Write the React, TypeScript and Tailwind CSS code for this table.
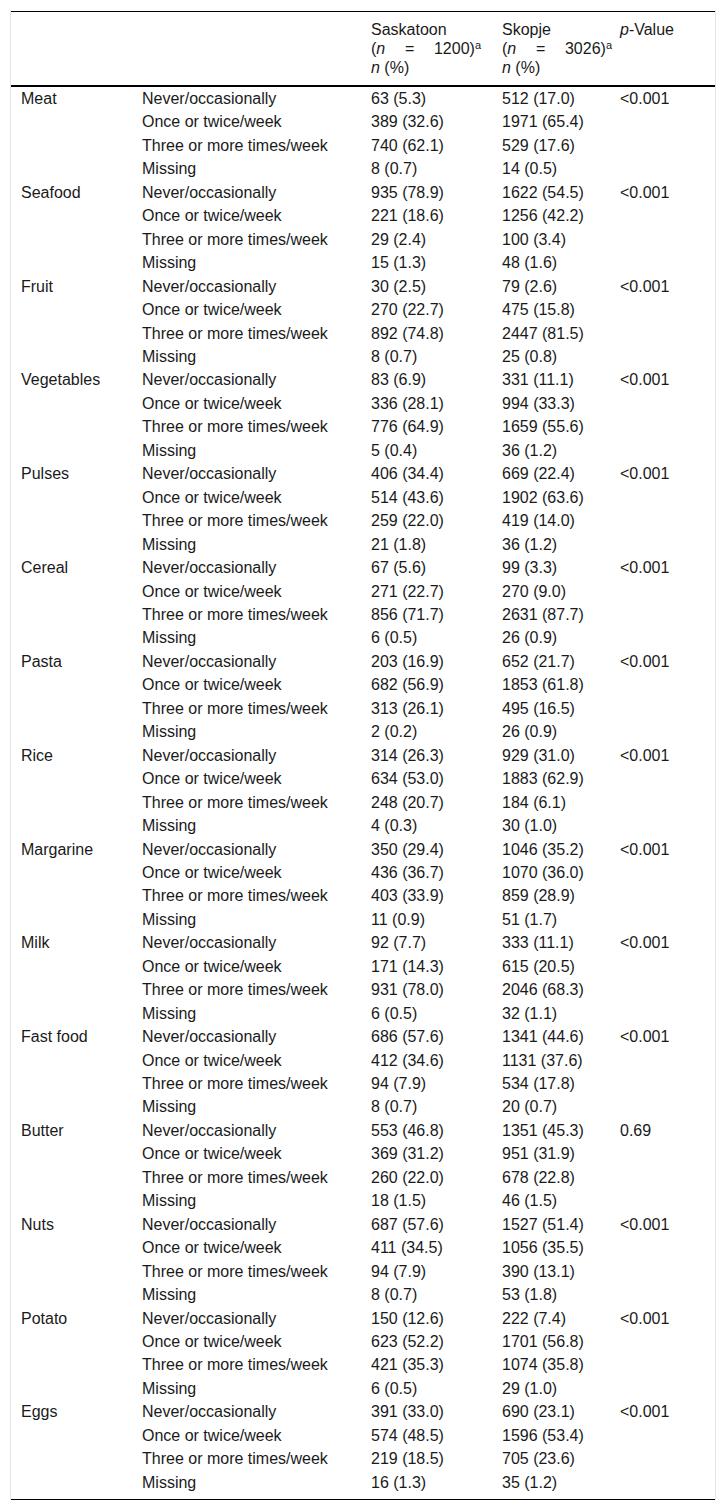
const freq = ["Never/occasionally", "Once or twice/week", "Three or more times/week", "Missing"];

const groups: { food: string; sk: string[]; mk: string[]; p: string }[] = [
  { food: "Meat", sk: ["63 (5.3)", "389 (32.6)", "740 (62.1)", "8 (0.7)"], mk: ["512 (17.0)", "1971 (65.4)", "529 (17.6)", "14 (0.5)"], p: "<0.001" },
  { food: "Seafood", sk: ["935 (78.9)", "221 (18.6)", "29 (2.4)", "15 (1.3)"], mk: ["1622 (54.5)", "1256 (42.2)", "100 (3.4)", "48 (1.6)"], p: "<0.001" },
  { food: "Fruit", sk: ["30 (2.5)", "270 (22.7)", "892 (74.8)", "8 (0.7)"], mk: ["79 (2.6)", "475 (15.8)", "2447 (81.5)", "25 (0.8)"], p: "<0.001" },
  { food: "Vegetables", sk: ["83 (6.9)", "336 (28.1)", "776 (64.9)", "5 (0.4)"], mk: ["331 (11.1)", "994 (33.3)", "1659 (55.6)", "36 (1.2)"], p: "<0.001" },
  { food: "Pulses", sk: ["406 (34.4)", "514 (43.6)", "259 (22.0)", "21 (1.8)"], mk: ["669 (22.4)", "1902 (63.6)", "419 (14.0)", "36 (1.2)"], p: "<0.001" },
  { food: "Cereal", sk: ["67 (5.6)", "271 (22.7)", "856 (71.7)", "6 (0.5)"], mk: ["99 (3.3)", "270 (9.0)", "2631 (87.7)", "26 (0.9)"], p: "<0.001" },
  { food: "Pasta", sk: ["203 (16.9)", "682 (56.9)", "313 (26.1)", "2 (0.2)"], mk: ["652 (21.7)", "1853 (61.8)", "495 (16.5)", "26 (0.9)"], p: "<0.001" },
  { food: "Rice", sk: ["314 (26.3)", "634 (53.0)", "248 (20.7)", "4 (0.3)"], mk: ["929 (31.0)", "1883 (62.9)", "184 (6.1)", "30 (1.0)"], p: "<0.001" },
  { food: "Margarine", sk: ["350 (29.4)", "436 (36.7)", "403 (33.9)", "11 (0.9)"], mk: ["1046 (35.2)", "1070 (36.0)", "859 (28.9)", "51 (1.7)"], p: "<0.001" },
  { food: "Milk", sk: ["92 (7.7)", "171 (14.3)", "931 (78.0)", "6 (0.5)"], mk: ["333 (11.1)", "615 (20.5)", "2046 (68.3)", "32 (1.1)"], p: "<0.001" },
  { food: "Fast food", sk: ["686 (57.6)", "412 (34.6)", "94 (7.9)", "8 (0.7)"], mk: ["1341 (44.6)", "1131 (37.6)", "534 (17.8)", "20 (0.7)"], p: "<0.001" },
  { food: "Butter", sk: ["553 (46.8)", "369 (31.2)", "260 (22.0)", "18 (1.5)"], mk: ["1351 (45.3)", "951 (31.9)", "678 (22.8)", "46 (1.5)"], p: "0.69" },
  { food: "Nuts", sk: ["687 (57.6)", "411 (34.5)", "94 (7.9)", "8 (0.7)"], mk: ["1527 (51.4)", "1056 (35.5)", "390 (13.1)", "53 (1.8)"], p: "<0.001" },
  { food: "Potato", sk: ["150 (12.6)", "623 (52.2)", "421 (35.3)", "6 (0.5)"], mk: ["222 (7.4)", "1701 (56.8)", "1074 (35.8)", "29 (1.0)"], p: "<0.001" },
  { food: "Eggs", sk: ["391 (33.0)", "574 (48.5)", "219 (18.5)", "16 (1.3)"], mk: ["690 (23.1)", "1596 (53.4)", "705 (23.6)", "35 (1.2)"], p: "<0.001" },
];

const cols = "grid grid-cols-[121px_229px_131px_118px_1fr]";

function CityHead({ city, n }: { city: string; n: string }) {
  return (
    <div className="pl-[10px] pt-[8px]">
      <div>{city}</div>
      <div className="flex w-[110px] justify-between">
        <span><span>(</span><i>n</i></span>
        <span>=</span>
        <span>
          {n})<sup className="text-[11px] leading-none">a</sup>
        </span>
      </div>
      <div><i>n</i> (%)</div>
    </div>
  );
}

export default function App() {
  return (
    <div className="min-h-[1512px] bg-white pt-[10px] text-[16px] text-[#1a1a1a]" style={{ fontFamily: '"Liberation Sans", Arial, sans-serif' }}>
      <div className="ml-[10px] w-[706px] border-x border-[#e4e4e4] pt-[1px]">
        <div className="border-t border-b border-black pb-[5px]">
          {/* header */}
          <div className={`${cols} h-[75px] border-b-2 border-black leading-[19px]`}>
            <div />
            <div />
            <CityHead city="Saskatoon" n="1200" />
            <CityHead city="Skopje" n="3026" />
            <div className="pl-[10px] pt-[8px]">
              <i>p</i>-Value
            </div>
          </div>

          {/* body */}
          {groups.map(g =>
            freq.map((f, i) => (
              <div key={g.food + f} className={`${cols} h-[23.46px] items-center leading-[23.46px]`}>
                <div className="pl-[10px]">{i === 0 ? g.food : ""}</div>
                <div className="pl-[10px]">{f}</div>
                <div className="pl-[10px]">{g.sk[i]}</div>
                <div className="pl-[10px]">{g.mk[i]}</div>
                <div className="pl-[10px]">{i === 0 ? g.p : ""}</div>
              </div>
            ))
          )}
        </div>
      </div>
    </div>
  );
}
